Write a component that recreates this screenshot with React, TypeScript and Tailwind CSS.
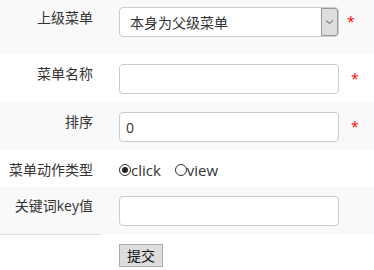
import { ReactNode } from 'react';

const font = { fontFamily: '"Open Sans", "Noto Sans CJK SC", sans-serif' };

function Row({ gray, h, label, labelPt, children, line }: { gray?: boolean; h: string; label: string; labelPt: string; children: ReactNode; line?: boolean }) {
  return (
    <div className={`flex ${h} ${gray ? 'bg-[#f9f9f9]' : 'bg-white'}`}>
      <div className={`w-[101px] shrink-0 pr-2 text-right text-[14px] leading-5 text-[#333] ${labelPt} ${line ? 'border-b border-[#ddd]' : ''}`}>
        {label}
      </div>
      <div className="flex-1 pl-[18px]">{children}</div>
    </div>
  );
}

function TextInput({ value = '' }: { value?: string }) {
  return (
    <div className="flex h-[30px] w-[220px] items-center rounded-[4px] border border-[#ccc] bg-white px-[6px] text-[14px] text-[#333]">
      {value}
    </div>
  );
}

function Star({ ml }: { ml: string }) {
  return <span className={`${ml} text-[14px] leading-none text-[#f00]`}>*</span>;
}

function Radio({ checked, label }: { checked?: boolean; label: string }) {
  return (
    <span className="flex items-center">
      <span className="flex h-[12px] w-[12px] items-center justify-center rounded-full border border-[#333] bg-white">
        {checked && <span className="h-[6px] w-[6px] rounded-full bg-[#222]" />}
      </span>
      <span className="text-[15px] leading-5 text-[#333]">{label}</span>
    </span>
  );
}

export default function App() {
  return (
    <div className="w-[374px] bg-white" style={font}>
      <Row gray h="h-[54px]" label="上级菜单" labelPt="pt-2">
        <div className="mt-[7px] flex items-center">
          <div className="flex h-[30px] w-[220px] items-stretch rounded-[4px] border border-[#ccc] bg-white">
            <div className="flex flex-1 items-center pl-[10px] text-[14px] text-[#333]">本身为父级菜单</div>
            <div className="flex w-[17px] items-center justify-center rounded-r-[3px] border border-[#999] bg-[#ddd]">
              <svg width="9" height="6" viewBox="0 0 9 6" fill="none">
                <path d="M1 1.5 L4.5 4.5 L8 1.5" stroke="#555" strokeWidth="1" />
              </svg>
            </div>
          </div>
          <Star ml="ml-[8px]" />
        </div>
      </Row>
      <Row h="h-[48px]" label="菜单名称" labelPt="pt-[10px]">
        <div className="mt-[10px] flex items-center">
          <TextInput />
          <Star ml="ml-[12px]" />
        </div>
      </Row>
      <Row gray h="h-[48px]" label="排序" labelPt="pt-[10px]">
        <div className="mt-[10px] flex items-center">
          <TextInput value="0" />
          <Star ml="ml-[12px]" />
        </div>
      </Row>
      <Row h="h-[37px]" label="菜单动作类型" labelPt="pt-[10px]">
        <div className="mt-[10px] flex items-center gap-[14px]">
          <Radio checked label="click" />
          <Radio label="view" />
        </div>
      </Row>
      <Row gray line h="h-[48px]" label="关键词key值" labelPt="pt-[9px]">
        <div className="mt-[9px]">
          <TextInput />
        </div>
      </Row>
      <div className="flex h-[35px] pl-[119px] pt-[9px]">
        <button className="flex h-[23px] w-[44px] items-center justify-center border border-[#aaa] bg-[#ddd] text-[14px] text-[#111]">
          提交
        </button>
      </div>
    </div>
  );
}
